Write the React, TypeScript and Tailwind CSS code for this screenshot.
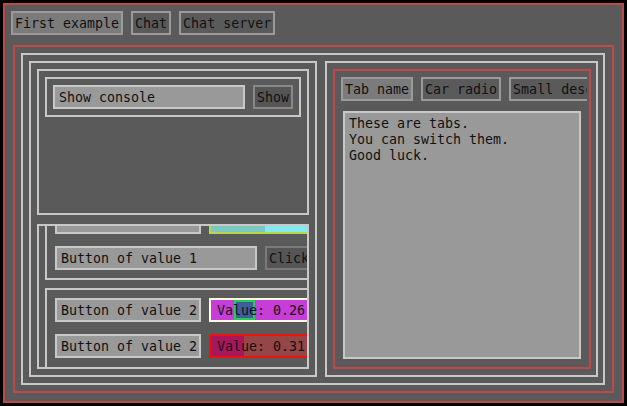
import React, { useLayoutEffect, useRef } from "react";

const text = "font-['DejaVu_Sans_Mono',monospace] text-[13.3px] leading-4 text-[#111] whitespace-nowrap";

const Tab: React.FC<{ label: string; active?: boolean }> = ({ label, active }) => (
  <div
    className={`${text} shrink-0 border-2 border-[#9a9a9a] px-[2px] pt-[3px] pb-[1px] ${
      active ? "bg-[#7b7b7b]" : "bg-[#5a5a5a]"
    }`}
  >
    {label}
  </div>
);

const Field: React.FC<{ label?: string; className?: string }> = ({ label, className = "" }) => (
  <div className={`${text} shrink-0 h-6 border-2 border-[#c8c8c8] bg-[#999999] px-[4px] pt-[3px] pb-[1px] ${className}`}>
    {label}
  </div>
);

const DarkButton: React.FC<{ label: string; border: string }> = ({ label, border }) => (
  <div className={`${text} shrink-0 border-2 ${border} bg-[#555555] px-[2px] pt-[3px] pb-[1px]`}>{label}</div>
);

// Slider: inner track is 108px wide, handle 21px.
interface SliderProps {
  value: number;
  label?: string;
  frame: string;
  track: string;
  fill?: string;
  handle?: boolean;
}

const Slider: React.FC<SliderProps> = ({ value, label, frame, track, fill, handle }) => (
  <div className={`relative shrink-0 w-[112px] h-6 border-2 ${frame} ${track}`}>
    {fill && <div className={`absolute inset-y-0 left-0 ${fill}`} style={{ width: Math.round(value * 108) }} />}
    {handle && (
      <div
        className="absolute inset-y-0 w-[21px] border-2 border-[#22cc55] bg-[#3e5d9e]"
        style={{ left: Math.round(value * 87) }}
      />
    )}
    {label && <div className={`${text} relative pl-[6px] pt-[3px] pb-[1px]`}>{label}</div>}
  </div>
);

export default function App() {
  const scrollRef = useRef<HTMLDivElement>(null);

  useLayoutEffect(() => {
    if (scrollRef.current) scrollRef.current.scrollTop = 32;
  }, []);

  return (
    <div className="w-[627px] h-[406px] bg-black p-[3px]">
      <div className="h-full border-2 border-[#c04848] bg-[#5a5a5a] flex flex-col">
        {/* top tabs */}
        <div className="flex gap-2 px-[6px] pt-[6px]">
          <Tab label="First example" active />
          <Tab label="Chat" />
          <Tab label="Chat server" />
        </div>

        <div className="mx-[8px] mt-[10px] mb-[8px] flex-1 min-h-0 min-w-0 border-2 border-[#c04848] pl-[6px] pr-[7px] py-[6px] flex">
          <div className="flex-1 min-w-0 border-2 border-[#c8c8c8] pl-[6px] pr-[5px] py-[6px] flex gap-2">
            {/* left column */}
            <div className="w-[288px] shrink-0 border-2 border-[#c8c8c8] p-[6px] flex flex-col gap-[9px]">
              <div className="h-[146px] shrink-0 border-2 border-[#c8c8c8] p-[6px]">
                <div className="border-2 border-[#c8c8c8] p-[6px] flex gap-2">
                  <Field label="Show console" className="flex-1" />
                  <DarkButton label="Show" border="border-[#888888]" />
                </div>
              </div>

              <div ref={scrollRef} className="flex-1 min-h-0 border-2 border-[#c8c8c8] overflow-hidden">
                <div className="w-max p-[6px] flex flex-col gap-2">
                  <div className="border-2 border-[#c8c8c8] p-2 flex flex-col gap-3">
                    <div className="flex gap-2">
                      <Field className="w-[146px]" />
                      <Slider
                        value={0.5}
                        frame="border-[#b6d84a]"
                        track="bg-[#84e8f0]"
                        fill="bg-[#7cc8c0]"
                      />
                    </div>
                    <div className="flex gap-2">
                      <Field label="Button of value 1" className="w-[202px]" />
                      <DarkButton label="Click" border="border-[#7a7a7a]" />
                    </div>
                  </div>

                  <div className="border-2 border-[#c8c8c8] p-2 pb-6 flex flex-col gap-3">
                    <div className="flex gap-2">
                      <Field label="Button of value 2" className="w-[146px]" />
                      <Slider
                        value={0.26}
                        label="Value: 0.26"
                        frame="border-[#fffde0]"
                        track="bg-[#c83cd8]"
                        handle
                      />
                    </div>
                    <div className="flex gap-2">
                      <Field label="Button of value 2" className="w-[146px]" />
                      <Slider
                        value={0.31}
                        label="Value: 0.31"
                        frame="border-[#ee1111]"
                        track="bg-[#964646]"
                        fill="bg-[#a8175c]"
                      />
                    </div>
                  </div>
                </div>
              </div>
            </div>

            {/* right column */}
            <div className="flex-1 min-w-0 border-2 border-[#c8c8c8] pl-[6px] pr-[5px] py-[6px] flex">
              <div className="flex-1 min-w-0 border-2 border-[#c04848] flex flex-col">
                <div className="ml-[6px] mr-[2px] mt-[6px] flex gap-2 overflow-hidden">
                  <Tab label="Tab name" active />
                  <Tab label="Car radio" />
                  <Tab label="Small description" />
                </div>
                <div
                  className={`${text} whitespace-pre mx-[8px] mt-[10px] mb-[8px] flex-1 border-2 border-[#c8c8c8] bg-[#999999] px-[4px] pt-[3px]`}
                >
                  {"These are tabs.\nYou can switch them.\nGood luck."}
                </div>
              </div>
            </div>
          </div>
        </div>
      </div>
    </div>
  );
}
